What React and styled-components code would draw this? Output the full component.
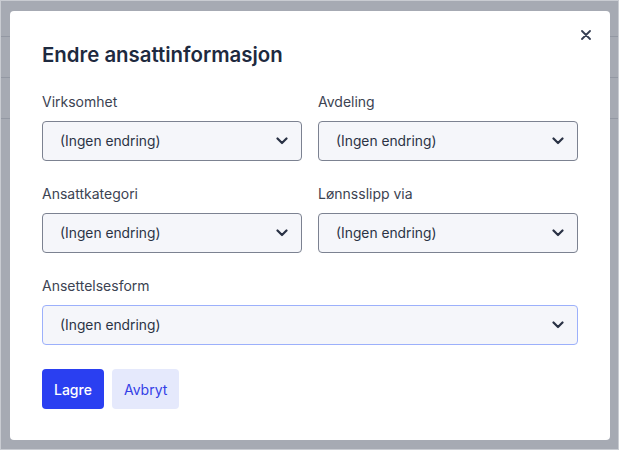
import React, { useState } from "react";
import styled, { createGlobalStyle } from "styled-components";

const GlobalStyle = createGlobalStyle`
  html, body {
    margin: 0;
    padding: 0;
  }
  body {
    font-family: Inter, "Noto Sans", "Liberation Sans", sans-serif;
    -webkit-font-smoothing: antialiased;
  }
  * {
    box-sizing: border-box;
  }
`;

const fields = [
  ["Virksomhet", "Avdeling"],
  ["Ansattkategori", "Lønnsslipp via"],
  ["Ansettelsesform"],
];

const Chevron = () => (
  <svg width="12" height="8" viewBox="0 0 12 8" fill="none">
    <path
      d="M1.5 1.5L6 6L10.5 1.5"
      stroke="#2a3245"
      strokeWidth="2.2"
      strokeLinecap="round"
      strokeLinejoin="round"
    />
  </svg>
);

const CloseIcon = () => (
  <svg width="10" height="10" viewBox="0 0 10 10" fill="none">
    <path
      d="M1 1L9 9M9 1L1 9"
      stroke="#353d52"
      strokeWidth="1.8"
      strokeLinecap="round"
    />
  </svg>
);

const SelectField = ({ label, focused }) => (
  <Field>
    <Label>{label}</Label>
    <SelectBox $focused={focused}>
      <span>(Ingen endring)</span>
      <Chevron />
    </SelectBox>
  </Field>
);

const App = () => {
  const [open] = useState(true);

  return (
    <>
      <GlobalStyle />
      <Page>
        <BackgroundTable>
          <BgRow />
          <BgRow />
          <BgRow />
        </BackgroundTable>
        {open && (
          <Overlay>
            <Modal>
              <CloseButton aria-label="Lukk">
                <CloseIcon />
              </CloseButton>
              <Title>Endre ansattinformasjon</Title>
              <Form>
                {fields.map((row, i) => (
                  <Row key={i} $cols={row.length}>
                    {row.map((label) => (
                      <SelectField
                        key={label}
                        label={label}
                        focused={label === "Ansettelsesform"}
                      />
                    ))}
                  </Row>
                ))}
              </Form>
              <Actions>
                <Button $primary>Lagre</Button>
                <Button>Avbryt</Button>
              </Actions>
            </Modal>
          </Overlay>
        )}
      </Page>
    </>
  );
};
export default App;

const Page = styled.div`
  position: relative;
  width: 619px;
  height: 450px;
  border: 1px solid #c9ccd2;
  background-color: #ffffff;
  overflow: hidden;
`;

const BackgroundTable = styled.div`
  display: flex;
  flex-direction: column;
`;

const BgRow = styled.div`
  height: 41px;
  border-bottom: 1px solid #c6c9cf;

  &:first-child {
    height: 36px;
  }
`;

const Overlay = styled.div`
  position: absolute;
  inset: 0;
  background-color: rgba(120, 126, 140, 0.66);
  padding: 10px 0 0 9px;
`;

const Modal = styled.div`
  position: relative;
  width: 600px;
  background-color: #ffffff;
  border-radius: 4px;
  padding: 30px 32px 31px;
`;

const CloseButton = styled.button`
  position: absolute;
  top: 16px;
  right: 16px;
  width: 16px;
  height: 16px;
  padding: 0;
  border: none;
  background: none;
  display: flex;
  align-items: center;
  justify-content: center;
  cursor: pointer;
`;

const Title = styled.h2`
  margin: 0 0 23px;
  font-size: 20.4px;
  line-height: 28px;
  font-weight: 600;
  color: #1e2a3f;
`;

const Form = styled.div`
  display: flex;
  flex-direction: column;
  gap: 23px;
`;

const Row = styled.div`
  display: grid;
  grid-template-columns: ${(p) => (p.$cols === 1 ? "1fr" : "1fr 1fr")};
  gap: 16px;
`;

const Field = styled.div`
  display: flex;
  flex-direction: column;
`;

const Label = styled.label`
  font-size: 14px;
  line-height: 20px;
  color: #3c4352;
  margin-bottom: 9px;
`;

const SelectBox = styled.div`
  height: 40px;
  display: flex;
  align-items: center;
  justify-content: space-between;
  padding: 0 13px 0 17px;
  border: 1px solid ${(p) => (p.$focused ? "#9cb0fb" : "#7c8291")};
  border-radius: 4px;
  background-color: #f5f6fa;
  font-size: 13.8px;
  color: #2b3345;
  cursor: pointer;
`;

const Actions = styled.div`
  display: flex;
  gap: 8px;
  margin-top: 24px;
`;

const Button = styled.button`
  height: 40px;
  padding: 0 12px;
  border: none;
  border-radius: 4px;
  font-family: inherit;
  font-size: 14px;
  font-weight: ${(p) => (p.$primary ? 500 : 400)};
  background-color: ${(p) => (p.$primary ? "#2a3ff1" : "#e5e9fc")};
  color: ${(p) => (p.$primary ? "#ffffff" : "#3440e6")};
  cursor: pointer;
`;
